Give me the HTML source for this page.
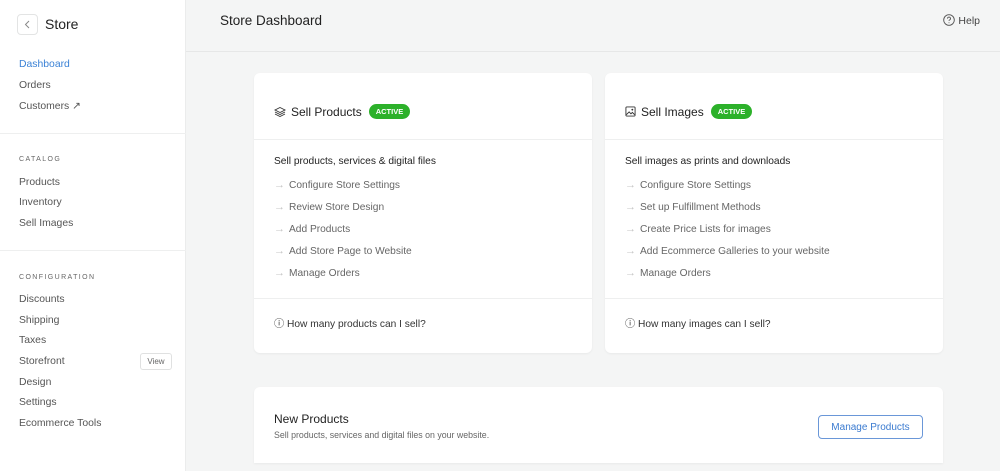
<!DOCTYPE html>
<html><head><style>
*{box-sizing:border-box;margin:0;padding:0}
body{width:1000px;height:471px;overflow:hidden;background:#f4f5f5;font-family:"Liberation Sans",sans-serif;position:relative;color:#333}
.side{position:absolute;left:0;top:0;width:186px;height:471px;background:#fff;border-right:1px solid #ebecec}
.back{position:absolute;left:17px;top:14px;width:21px;height:21px;border:1px solid #e3e4e4;border-radius:4px}
.title{position:absolute;left:45px;top:16px;font-size:14px;color:#222}
.nav{position:absolute;left:19px;font-size:10.4px;color:#555}
.sec{position:absolute;left:19px;font-size:7px;letter-spacing:1.4px;color:#666}
.hr{position:absolute;left:0;width:186px;height:1px;background:#eeefef}
.view{position:absolute;left:140px;top:353px;width:32px;height:17px;border:1px solid #e0e1e1;border-radius:3px;font-size:8px;color:#666;text-align:center;line-height:15px}
.hdr{position:absolute;left:186px;top:0;right:0;height:52px;border-bottom:1px solid #e6e7e7}
.hdr h1{position:absolute;left:34px;top:13px;font-size:13.5px;font-weight:normal;color:#222}
.help{position:absolute;right:20px;top:14px;font-size:10.5px;color:#444}
.card{position:absolute;background:#fff;border-radius:6px;box-shadow:0 1px 2px rgba(0,0,0,.05)}
.ct{position:absolute;left:20px;top:31px;font-size:12px;color:#222;display:flex;align-items:center;gap:5px}
.badge{background:#2cb12a;color:#fff;font-size:7.5px;font-weight:bold;border-radius:8px;padding:3px 7px;margin-left:2px}
.line{position:absolute;left:0;right:0;height:1px;background:#eeefef}
.sub{position:absolute;left:20px;top:83px;font-size:10.2px;color:#222}
.item{position:absolute;left:20px;font-size:10.2px;color:#666}
.item span{color:#c4c4c4;margin-right:4px;font-size:11px}
.q{position:absolute;left:20px;top:242px;font-size:10.2px;color:#333}
.btn{position:absolute;left:564px;top:28px;width:105px;height:24px;border:1px solid #6a97d8;border-radius:4px;color:#3b7bd0;font-size:10px;text-align:center;line-height:24px}
</style></head><body>
<div class="side">
<div class="back"><svg width="19" height="19" viewBox="0 0 19 19"><path d="M11 6l-3.5 3.5L11 13" fill="none" stroke="#888" stroke-width="1"/></svg></div>
<div class="title">Store</div>
<div class="nav" style="top:59px;color:#3b82d6">Dashboard</div>
<div class="nav" style="top:80px">Orders</div>
<div class="nav" style="top:100px">Customers ↗</div>
<div class="hr" style="top:133px"></div>
<div class="sec" style="top:156px">CATALOG</div>
<div class="nav" style="top:177px">Products</div>
<div class="nav" style="top:197px">Inventory</div>
<div class="nav" style="top:218px">Sell Images</div>
<div class="hr" style="top:250px"></div>
<div class="sec" style="top:274px">CONFIGURATION</div>
<div class="nav" style="top:294px">Discounts</div>
<div class="nav" style="top:315px">Shipping</div>
<div class="nav" style="top:335px">Taxes</div>
<div class="nav" style="top:356px">Storefront</div>
<div class="view">View</div>
<div class="nav" style="top:377px">Design</div>
<div class="nav" style="top:397px">Settings</div>
<div class="nav" style="top:418px">Ecommerce Tools</div>
</div>
<div class="hdr"><h1>Store Dashboard</h1>
<div class="help"><svg width="12" height="12" viewBox="0 0 12 12" style="vertical-align:-2px"><circle cx="6" cy="6" r="5.3" fill="none" stroke="#555" stroke-width="0.9"/><path d="M4.5 4.6a1.5 1.5 0 1 1 2 1.4c-.4.2-.5.5-.5.9" fill="none" stroke="#555" stroke-width="0.9"/><circle cx="6" cy="8.7" r=".5" fill="#555"/></svg> Help</div></div>

<div class="card" style="left:254px;top:73px;width:338px;height:280px">
<div class="ct"><svg width="12" height="12" viewBox="0 0 12 12"><path d="M6 1.5L11 4 6 6.5 1 4z M1 6l5 2.5L11 6 M1 8l5 2.5L11 8" fill="none" stroke="#333" stroke-width="0.9"/></svg>Sell Products<span class="badge">ACTIVE</span></div>
<div class="line" style="top:66px"></div>
<div class="sub">Sell products, services &amp; digital files</div>
<div class="item" style="top:106px"><span>→</span>Configure Store Settings</div>
<div class="item" style="top:128px"><span>→</span>Review Store Design</div>
<div class="item" style="top:150px"><span>→</span>Add Products</div>
<div class="item" style="top:172px"><span>→</span>Add Store Page to Website</div>
<div class="item" style="top:194px"><span>→</span>Manage Orders</div>
<div class="line" style="top:225px"></div>
<div class="q">ⓘ How many products can I sell?</div>
</div>

<div class="card" style="left:605px;top:73px;width:338px;height:280px">
<div class="ct"><svg width="11" height="11" viewBox="0 0 12 12"><rect x="1" y="1" width="10" height="10" rx="1" fill="none" stroke="#333" stroke-width="1"/><path d="M1.5 9.5l3-3 2 2 1.5-1.5 2.5 2.5" fill="none" stroke="#333" stroke-width="1"/><circle cx="8" cy="4" r="1" fill="#333"/></svg>Sell Images<span class="badge">ACTIVE</span></div>
<div class="line" style="top:66px"></div>
<div class="sub">Sell images as prints and downloads</div>
<div class="item" style="top:106px"><span>→</span>Configure Store Settings</div>
<div class="item" style="top:128px"><span>→</span>Set up Fulfillment Methods</div>
<div class="item" style="top:150px"><span>→</span>Create Price Lists for images</div>
<div class="item" style="top:172px"><span>→</span>Add Ecommerce Galleries to your website</div>
<div class="item" style="top:194px"><span>→</span>Manage Orders</div>
<div class="line" style="top:225px"></div>
<div class="q">ⓘ How many images can I sell?</div>
</div>

<div class="card" style="left:254px;top:387px;width:689px;height:76px;border-radius:6px 6px 0 0">
<div style="position:absolute;left:20px;top:25px;font-size:12px;color:#222">New Products</div>
<div style="position:absolute;left:20px;top:43px;font-size:8.8px;color:#666">Sell products, services and digital files on your website.</div>
<div class="btn">Manage Products</div>
</div>
</body></html>
